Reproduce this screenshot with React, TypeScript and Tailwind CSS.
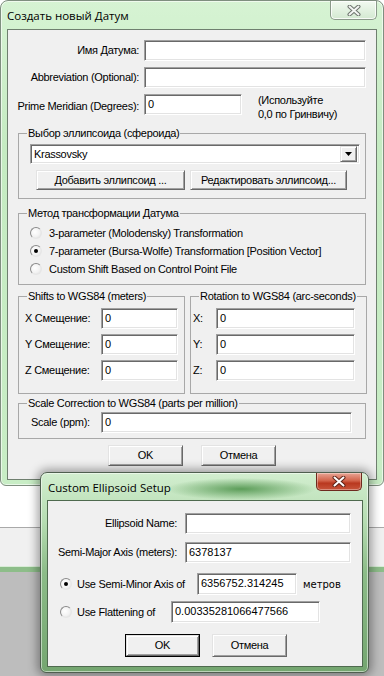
import React from 'react';

const sans = "font-['Liberation_Sans',Arial,sans-serif] tracking-[-0.3px]";
const ui = "font-['Open_Sans','Liberation_Sans',sans-serif]";

function Field({ value = '', className = '' }: { value?: string; className?: string }) {
  return (
    <div
      className={`h-[21px] bg-white border border-t-[#a0a0a0] border-l-[#a0a0a0] border-b-white border-r-white shadow-[inset_1px_1px_0_#696969,inset_-1px_-1px_0_#e3e3e3] pl-[3px] pt-[3px] leading-[13px] tracking-normal ${className}`}
    >
      {value}
    </div>
  );
}

function Btn({ children, className = '', isDefault = false }: { children: React.ReactNode; className?: string; isDefault?: boolean }) {
  return (
    <div className={`${isDefault ? 'border border-black' : ''} ${className}`}>
      <div className="w-full h-full flex items-center justify-center bg-[#f0f0f0] border border-t-[#e3e3e3] border-l-[#e3e3e3] border-b-[#696969] border-r-[#696969] shadow-[inset_1px_1px_0_#fff,inset_-1px_-1px_0_#a0a0a0]">
        {children}
      </div>
    </div>
  );
}

function Radio({ checked = false }: { checked?: boolean }) {
  return (
    <div className="w-[12px] h-[12px] shrink-0 rounded-full border border-t-[#8a8a8a] border-l-[#8a8a8a] border-b-[#e6e6e6] border-r-[#e6e6e6] bg-[radial-gradient(circle_at_40%_40%,#ffffff_0%,#f2f2f2_55%,#d8d8d8_100%)] flex items-center justify-center">
      {checked && <div className="w-[4px] h-[4px] rounded-full bg-black" />}
    </div>
  );
}

function CloseX({ light = false }: { light?: boolean }) {
  return (
    <svg width="14" height="11" viewBox="0 0 14 11">
      <path d="M2.5 1.5 L11.5 9.5 M11.5 1.5 L2.5 9.5" stroke={light ? '#5e2418' : '#6d746d'} strokeWidth="4" strokeLinecap="round" fill="none" />
      <path d="M2.5 1.5 L11.5 9.5 M11.5 1.5 L2.5 9.5" stroke={light ? '#ffffff' : '#f4f6f4'} strokeWidth="2" strokeLinecap="round" fill="none" />
    </svg>
  );
}

function Group({ title, className = '', children }: { title: string; className?: string; children: React.ReactNode }) {
  return (
    <fieldset className={`border border-[#a8a8a8] ${className}`}>
      <legend className="ml-[8px] px-[1px] leading-[13px] whitespace-nowrap">{title}</legend>
      {children}
    </fieldset>
  );
}

function MainWindow() {
  return (
    <div className="absolute left-0 top-0 w-[384px] h-[486px] rounded-t-[8px] rounded-b-[6px] border border-[#7f8f7f] bg-[linear-gradient(180deg,#d6f3d3_0%,#c5ebc2_30%,#c8edc5_100%)] shadow-[inset_0_0_0_1px_rgba(255,255,255,0.6)]">
      <div className="h-[28px] flex items-start">
        <span className={`${ui} text-[11.5px] text-black pl-[6px] pt-[6px]`}>Создать новый Датум</span>
        <div className="ml-auto mr-[6px] w-[47px] h-[19px] rounded-b-[5px] border border-t-0 border-[#8a998a] bg-[linear-gradient(180deg,#f2faf1,#d3e9d1)] shadow-[inset_0_0_0_1px_rgba(255,255,255,0.8)] flex items-center justify-center">
          <CloseX />
        </div>
      </div>
      <div className={`ml-[6px] w-[370px] h-[451px] border border-[#6f7f6f] bg-[#f0f0f0] ${sans} text-[11px] text-black`}>
        <div className="flex items-center mt-[10px]">
          <span className="w-[131px] text-right">Имя Датума:</span>
          <Field className="ml-[5px] w-[222px]" />
        </div>
        <div className="flex items-center mt-[6px]">
          <span className="w-[131px] text-right">Abbreviation (Optional):</span>
          <Field className="ml-[5px] w-[222px]" />
        </div>
        <div className="flex items-start mt-[6px]">
          <span className="w-[131px] text-right pt-[4px]">Prime Meridian (Degrees):</span>
          <Field className="ml-[5px] w-[98px]" value="0" />
          <div className="ml-[16px] leading-[14px] -mt-[1px]">
            <div>(Используйте</div>
            <div>0,0 по Гринвичу)</div>
          </div>
        </div>

        <div className="pl-[10px]">
          <Group title="Выбор эллипсоида (сфероида)" className="mt-[6px] w-[348px] h-[72px]">
            <div className="ml-[11px] mt-[4px] w-[330px] h-[20px] bg-white border border-t-[#a0a0a0] border-l-[#a0a0a0] border-b-white border-r-white shadow-[inset_1px_1px_0_#696969,inset_-1px_-1px_0_#e3e3e3] flex items-center">
              <span className="flex-1 pl-[3px]">Krassovsky</span>
              <Btn className="w-[17px] h-[16px] mr-[2px]">
                <svg width="7" height="4" viewBox="0 0 7 4"><path d="M0 0 H7 L3.5 4 Z" fill="#000" /></svg>
              </Btn>
            </div>
            <div className="flex gap-[5px] ml-[17px] mt-[6px]">
              <Btn className="w-[149px] h-[20px]">Добавить эллипсоид ...</Btn>
              <Btn className="w-[157px] h-[20px]">Редактировать эллипсоид...</Btn>
            </div>
          </Group>

          <Group title="Метод трансформации Датума" className="mt-[8px] w-[348px] h-[78px]">
            <div className="mt-[4px] pl-[11px]">
              <div className="h-[18px] flex items-center gap-[7px]"><Radio /><span>3-parameter (Molodensky) Transformation</span></div>
              <div className="h-[18px] flex items-center gap-[7px]"><Radio checked /><span>7-parameter (Bursa-Wolfe) Transformation [Position Vector]</span></div>
              <div className="h-[18px] flex items-center gap-[7px]"><Radio /><span>Custom Shift Based on Control Point File</span></div>
            </div>
          </Group>

          <div className="flex gap-[5px] mt-[5px]">
            <Group title="Shifts to WGS84 (meters)" className="w-[167px] h-[104px]">
              <div className="mt-[5px] pl-[6px] flex flex-col gap-[5px]">
                {['X Смещение:', 'Y Смещение:', 'Z Смещение:'].map((l) => (
                  <div key={l} className="flex items-center">
                    <span className="w-[76px]">{l}</span>
                    <Field className="w-[77px]" value="0" />
                  </div>
                ))}
              </div>
            </Group>
            <Group title="Rotation to WGS84 (arc-seconds)" className="w-[177px] h-[104px]">
              <div className="mt-[5px] pl-[2px] flex flex-col gap-[5px]">
                {['X:', 'Y:', 'Z:'].map((l) => (
                  <div key={l} className="flex items-center">
                    <span className="w-[23px]">{l}</span>
                    <Field className="w-[139px]" value="0" />
                  </div>
                ))}
              </div>
            </Group>
          </div>

          <Group title="Scale Correction to WGS84 (parts per million)" className="mt-[3px] w-[348px] h-[42px]">
            <div className="mt-[2px] pl-[12px] flex items-center">
              <span className="w-[70px]">Scale (ppm):</span>
              <Field className="w-[251px]" value="0" />
            </div>
          </Group>

          <div className="flex gap-[18px] ml-[90px] mt-[6px]">
            <Btn className="w-[75px] h-[21px]">OK</Btn>
            <Btn className="w-[75px] h-[21px]">Отмена</Btn>
          </div>
        </div>
      </div>
    </div>
  );
}

function EllipsoidWindow() {
  return (
    <div className="absolute left-[40px] top-[472px] w-[329px] h-[201px] rounded-t-[7px] rounded-b-[6px] border border-[#4f5f4f] bg-[radial-gradient(ellipse_75px_11px_at_200px_16px,#5c9d59_0%,rgba(92,157,89,0)_100%),linear-gradient(180deg,#d2eecf_0%,#b5dcb1_25%,#8cbc88_50%,#74a670_100%)] shadow-[0_0_10px_3px_rgba(0,0,0,0.35),inset_0_0_0_1px_rgba(255,255,255,0.5)]">
      <div className="h-[27px] flex items-start">
        <span className={`${ui} text-[11.5px] text-black pl-[7px] pt-[6px]`}>Custom Ellipsoid Setup</span>
        <div className="ml-auto mr-[6px] w-[46px] h-[18px] rounded-b-[5px] border border-t-0 border-[#6e2a1e] bg-[linear-gradient(180deg,#e9a595_0%,#d2634a_45%,#b9381f_60%,#c8553b_100%)] shadow-[inset_0_0_0_1px_rgba(255,255,255,0.35)] flex items-center justify-center">
          <CloseX light />
        </div>
      </div>
      <div className={`ml-[6px] w-[316px] h-[167px] border border-[#4f6a4f] bg-[#f0f0f0] ${sans} text-[11px] text-black`}>
        <div className="flex items-center mt-[12px]">
          <span className="w-[129px] text-right">Ellipsoid Name:</span>
          <Field className="ml-[8px] w-[166px] h-[20px]" />
        </div>
        <div className="flex items-center mt-[8px]">
          <span className="w-[129px] text-right">Semi-Major Axis (meters):</span>
          <Field className="ml-[8px] w-[166px]" value="6378137" />
        </div>
        <div className="flex items-center mt-[10px] pl-[12px]">
          <Radio checked />
          <span className="ml-[5px] w-[120px]">Use Semi-Minor Axis of</span>
          <Field className="w-[100px] h-[22px]" value="6356752.314245" />
          <span className="ml-[6px] font-['DejaVu_Sans',sans-serif] text-[10px] tracking-normal">метров</span>
        </div>
        <div className="flex items-center mt-[6px] pl-[12px]">
          <Radio />
          <span className="ml-[5px] w-[94px]">Use Flattening of</span>
          <Field className="w-[149px] h-[22px]" value="0.00335281066477566" />
        </div>
        <div className="flex gap-[12px] ml-[77px] mt-[11px]">
          <Btn isDefault className="w-[75px] h-[23px]">OK</Btn>
          <Btn className="w-[75px] h-[23px]">Отмена</Btn>
        </div>
      </div>
    </div>
  );
}

export default function App() {
  return (
    <div className="relative w-[384px] h-[676px] overflow-hidden">
      <div className="flex flex-col h-full">
        <div className="h-[527px] bg-white" />
        <div className="h-px bg-[#a9a9a9]" />
        <div className="h-[38px] bg-[#f0f0f0]" />
        <div className="h-px bg-[#d8ecd6]" />
        <div className="h-[5px] bg-[#8dbd89]" />
        <div className="flex-1 bg-[#bdbdbd]" />
      </div>
      <MainWindow />
      <EllipsoidWindow />
    </div>
  );
}
